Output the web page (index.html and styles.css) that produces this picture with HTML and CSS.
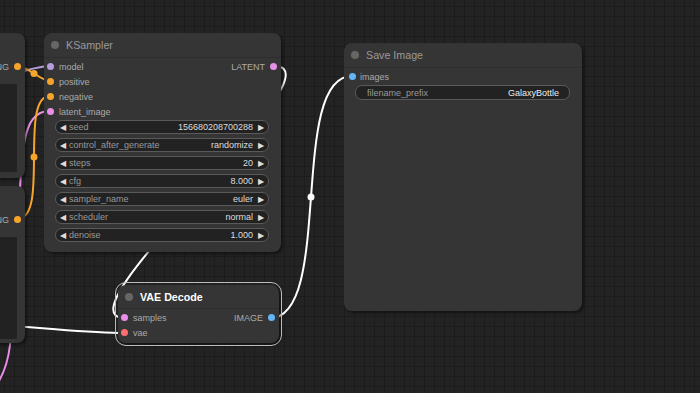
FILE: index.html
```html
<!DOCTYPE html>
<html lang="en">
<head>
    <meta charset="UTF-8">
    <title>ComfyUI Graph</title>
    <link rel="stylesheet" href="styles.css">
</head>
<body>
    <div class="canvas">
        <!-- links are drawn under the nodes -->
        <svg class="links" width="700" height="393" viewBox="0 0 700 393">
            <path d="M-40,80 C10,80 30,66 50,66" stroke="#b39ddb" />
            <path d="M50,111 C30,111 24,130 21,170 C18,230 14,300 10,345 C8,362 4,374 -4,386" stroke="#e98ee9" />
            <path d="M18,66 C26.8,66 41.2,81 50,81" stroke="#f7a52a" />
            <path d="M18,218.5 C49.5,218.5 18.5,96 50,96" stroke="#f7a52a" />
            <path d="M-60,322 C40,326 80,333 125,333" stroke="#ffffff" />
            <path d="M274,66 C347,66 52,318 125,318" stroke="#ffffff" />
            <path d="M270,318 C334,318 288,76 352,76" stroke="#ffffff" />
            <circle cx="34" cy="73.5" r="3.5" fill="#f7a52a" />
            <circle cx="34" cy="157" r="3.5" fill="#f7a52a" />
            <circle cx="311" cy="197" r="3.5" fill="#ffffff" />
        </svg>

        <div class="node clip-one">
            <div class="node-title"></div>
            <div class="slots">
                <div class="slot out"><span>CONDITIONING</span><i class="dot orange"></i></div>
            </div>
            <div class="textbox"></div>
        </div>

        <div class="node clip-two">
            <div class="node-title"></div>
            <div class="slots">
                <div class="slot out"><span>CONDITIONING</span><i class="dot orange"></i></div>
            </div>
            <div class="textbox"></div>
        </div>

        <div class="node ksampler">
            <div class="node-title"><i class="title-dot"></i>KSampler</div>
            <div class="slots">
                <div class="slot-row">
                    <div class="slot in"><i class="dot purple"></i><span>model</span></div>
                    <div class="slot out"><span>LATENT</span><i class="dot pink"></i></div>
                </div>
                <div class="slot in"><i class="dot orange"></i><span>positive</span></div>
                <div class="slot in"><i class="dot orange"></i><span>negative</span></div>
                <div class="slot in"><i class="dot pink"></i><span>latent_image</span></div>
            </div>
            <div class="widgets">
                <div class="widget"><b class="arrow">&#9664;</b><span class="w-label">seed</span><span class="w-value">156680208700288</span><b class="arrow">&#9654;</b></div>
                <div class="widget"><b class="arrow">&#9664;</b><span class="w-label">control_after_generate</span><span class="w-value">randomize</span><b class="arrow">&#9654;</b></div>
                <div class="widget"><b class="arrow">&#9664;</b><span class="w-label">steps</span><span class="w-value">20</span><b class="arrow">&#9654;</b></div>
                <div class="widget"><b class="arrow">&#9664;</b><span class="w-label">cfg</span><span class="w-value">8.000</span><b class="arrow">&#9654;</b></div>
                <div class="widget"><b class="arrow">&#9664;</b><span class="w-label">sampler_name</span><span class="w-value">euler</span><b class="arrow">&#9654;</b></div>
                <div class="widget"><b class="arrow">&#9664;</b><span class="w-label">scheduler</span><span class="w-value">normal</span><b class="arrow">&#9654;</b></div>
                <div class="widget"><b class="arrow">&#9664;</b><span class="w-label">denoise</span><span class="w-value">1.000</span><b class="arrow">&#9654;</b></div>
            </div>
        </div>

        <div class="node vae-decode selected">
            <div class="node-title"><i class="title-dot"></i>VAE Decode</div>
            <div class="slots">
                <div class="slot-row">
                    <div class="slot in"><i class="dot pink"></i><span>samples</span></div>
                    <div class="slot out"><span>IMAGE</span><i class="dot blue"></i></div>
                </div>
                <div class="slot in"><i class="dot red"></i><span>vae</span></div>
            </div>
        </div>

        <div class="node save-image">
            <div class="node-title"><i class="title-dot"></i>Save Image</div>
            <div class="slots">
                <div class="slot in"><i class="dot blue"></i><span>images</span></div>
            </div>
            <div class="widgets">
                <div class="widget text"><span class="w-label">filename_prefix</span><span class="w-value">GalaxyBottle</span></div>
            </div>
        </div>
    </div>
</body>
</html>
```

FILE: styles.css
```css
body {
    margin: 0;
    background: #222;
    font-family: Arial, "Liberation Sans", sans-serif;
    overflow: hidden;
}
.canvas {
    position: relative;
    width: 700px;
    height: 393px;
    overflow: hidden;
    background-color: #232323;
    background-image:
        linear-gradient(to right, #1c1c1c 1px, transparent 1px),
        linear-gradient(to bottom, #1c1c1c 1px, transparent 1px);
    background-size: 10px 10px;
    background-position: 4px 6px;
}
.links {
    position: absolute;
    left: 0;
    top: 0;
}
.links path {
    fill: none;
    stroke-width: 2;
}

/* nodes */
.node {
    position: absolute;
    box-sizing: border-box;
    background: #353535;
    border-radius: 8px;
    box-shadow: 2px 2px 3px rgba(0, 0, 0, 0.45);
    color: #aaa;
    font-size: 9px;
}
.node-title {
    height: 25px;
    display: flex;
    align-items: center;
    padding-left: 7px;
    font-size: 10.7px;
    color: #999;
    border-bottom: 1px solid #2e2e2e;
    box-sizing: border-box;
}
.title-dot {
    width: 8px;
    height: 8px;
    border-radius: 50%;
    background: #666;
    margin-right: 7px;
}
.slots {
    padding-top: 1px;
}
.slot-row {
    display: flex;
    justify-content: space-between;
}
.slot {
    height: 15px;
    display: flex;
    align-items: center;
}
.slot.in {
    padding-left: 3px;
}
.slot.in .dot {
    margin-right: 5px;
}
.slot.out {
    justify-content: flex-end;
    padding-right: 4px;
}
.slot.out .dot {
    margin-left: 5px;
}
.dot {
    width: 7px;
    height: 7px;
    border-radius: 50%;
    display: inline-block;
}
.dot.orange { background: #f7a52a; }
.dot.purple { background: #b39ddb; }
.dot.pink { background: #e98ee9; }
.dot.blue { background: #64b5f6; }
.dot.red { background: #ff6e6e; }

/* widgets */
.widgets {
    display: flex;
    flex-direction: column;
    gap: 4px;
    padding: 1px 12px 0 11px;
}
.widget {
    height: 14px;
    box-sizing: border-box;
    border: 1px solid #5a5a5a;
    border-radius: 7px;
    background: #222;
    display: flex;
    align-items: center;
    padding: 0 4px;
}
.arrow {
    color: #ddd;
    font-size: 8px;
    font-weight: normal;
}
.w-label {
    flex: 1;
    color: #999;
    padding-left: 3px;
}
.w-value {
    color: #ddd;
    padding-right: 5px;
}
.widget.text {
    height: 15px;
    padding: 0 10px 0 11px;
}
.widget.text .w-label {
    padding-left: 0;
}
.widget.text .w-value {
    padding-right: 0;
    color: #eee;
}

/* left partial text encode nodes */
.clip-one {
    left: -60px;
    top: 33px;
    width: 85px;
    height: 145px;
}
.clip-two {
    left: -60px;
    top: 186px;
    width: 85px;
    height: 157px;
}
.clip-one .node-title,
.clip-two .node-title {
    border-bottom: none;
}
.textbox {
    margin: 10px 8px 0 0;
    background: #222;
    height: 88px;
}
.clip-two .textbox {
    height: 102px;
}

.ksampler {
    left: 44px;
    top: 33px;
    width: 237px;
    height: 219px;
}
.ksampler .slot.out {
    padding-right: 4px;
}

.vae-decode {
    left: 118px;
    top: 285px;
    width: 161px;
    height: 58px;
}
.vae-decode .node-title {
    height: 24px;
    color: #fff;
    font-weight: bold;
}
.selected {
    outline: 1px solid #bdbdbd;
    outline-offset: 2px;
}

.save-image {
    left: 344px;
    top: 43px;
    width: 238px;
    height: 268px;
}
.save-image .slot.in {
    padding-left: 5px;
}
.save-image .slot.in .dot {
    margin-right: 4px;
}
```
